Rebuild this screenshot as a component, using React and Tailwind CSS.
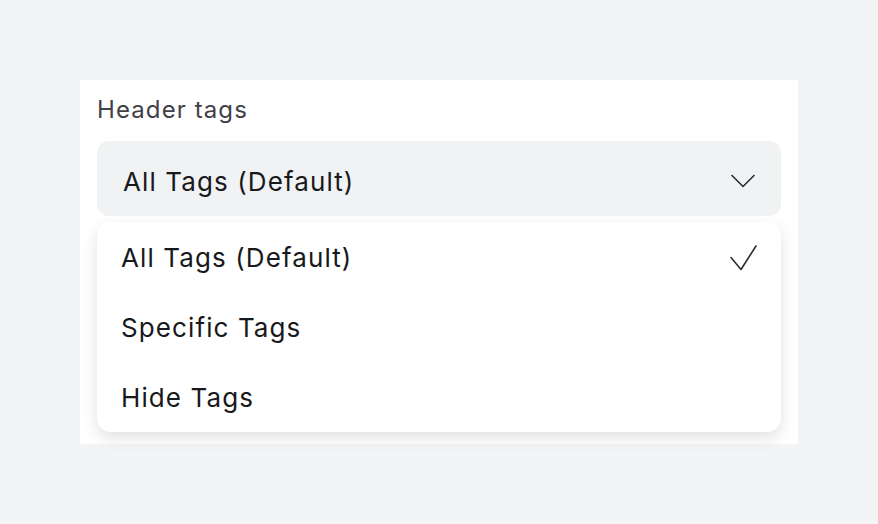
import React from 'react';

const options = ['All Tags (Default)', 'Specific Tags', 'Hide Tags'];

const App = () => {
  return (
    <div className="w-[878px] h-[524px] bg-[#f3f4f6] pt-[80px] pl-[80px] font-['Inter',sans-serif]">
      <div className="w-[718px] h-[364px] bg-white px-[17px] pt-[14px]">
        {/* Label */}
        <div className="text-[24px] leading-[32px] tracking-[1.1px] text-[#3f4147]">Header tags</div>

        {/* Select trigger */}
        <div className="mt-[15px] h-[75px] rounded-[12px] bg-[#f1f2f4] flex items-center justify-between pl-[26px] pr-[26px] pt-[5px]">
          <span className="text-[26px] tracking-[1.1px] text-[#18191c]">All Tags (Default)</span>
          <svg width="24" height="14" viewBox="0 0 24 14" fill="none" stroke="#2b2d31" strokeWidth="1.6" strokeLinecap="round" strokeLinejoin="round">
            <path d="M1 1.5l11 11 11-11" />
          </svg>
        </div>

        {/* Options list */}
        <div className="mt-[6px] rounded-[14px] bg-white shadow-[0_6px_16px_rgba(0,0,0,0.12)]">
          {options.map((opt, i) => (
            <div key={opt} className="h-[70px] flex items-center justify-between pl-[24px] pr-[24px] pt-[1px]">
              <span className="text-[26px] tracking-[1.1px] text-[#18191c]">{opt}</span>
              {i === 0 && (
                <svg width="27" height="26" viewBox="0 0 27 26" fill="none" stroke="#2b2d31" strokeWidth="1.6" strokeLinecap="round" strokeLinejoin="round">
                  <path d="M1 12.5l10 12L26 1" />
                </svg>
              )}
            </div>
          ))}
        </div>
      </div>
    </div>
  );
};

export default App;
